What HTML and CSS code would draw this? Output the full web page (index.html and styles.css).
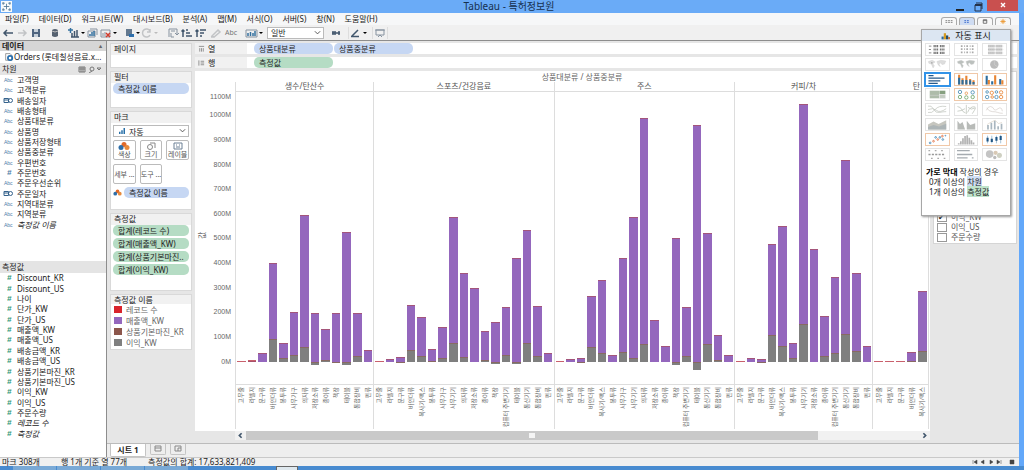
FILE: index.html
```html
<!DOCTYPE html>
<html lang="ko">
<head>
<meta charset="utf-8">
<title>Tableau - 특허정보원</title>
<link rel="stylesheet" href="styles.css">
</head>
<body>
<div class="window">
  <header class="titlebar">
    <svg class="app-icon" viewBox="0 0 20 20"><path d="M0 0h20v20H0z" fill="#f7fafc"/><path d="M10 5v10M5 10h10M4 2v5M2 4h5M16 2v5M13 4h5M4 13v5M2 16h5M16 13v5M13 16h5" stroke="#4d7594" stroke-width="1.5"/></svg>
    <h1 class="app-title">Tableau - 특허정보원</h1>
    <div class="window-buttons">
      <button class="win-btn" aria-label="최소화"><svg viewBox="0 0 18 10"><path d="M5 8h8" stroke="#222" stroke-width="2"/></svg></button>
      <button class="win-btn" aria-label="이전 크기로"><svg viewBox="0 0 18 10"><path d="M6 3h6v6H6zM7 1h6v6" fill="none" stroke="#24324a"/><path d="M6 3h7" stroke="#24324a" stroke-width="2"/></svg></button>
      <button class="win-btn close" aria-label="닫기"><svg viewBox="0 0 18 10"><path d="M7 3l4 4M11 3l-4 4" stroke="#fff" stroke-width="1.4"/></svg></button>
    </div>
  </header>

  <div class="frame">
    <nav class="menubar">
      <button>파일(F)</button><button>데이터(D)</button><button>워크시트(W)</button><button>대시보드(B)</button><button>분석(A)</button><button>맵(M)</button><button>서식(O)</button><button>서버(S)</button><button>창(N)</button><button>도움말(H)</button>
    </nav>

    <div class="toolbar">
      <div class="tools">
        <button aria-label="뒤로"><svg viewBox="0 0 14 12"><path d="M12 6H3M6 3L3 6l3 3" class="dark"/></svg></button>
        <button aria-label="앞으로"><svg viewBox="0 0 14 12"><path d="M3 6h8M8 3l3 3-3 3" class="pale"/></svg></button>
        <button aria-label="저장"><svg viewBox="0 0 14 12"><path d="M3 2h8v8H3z" fill="#4f6580"/><path d="M5 2h4v3H5zM5 7h4v3H5z" fill="#c6d0da"/></svg></button>
      </div>
      <div class="tools">
        <button aria-label="데이터 원본"><svg viewBox="0 0 14 12"><path d="M4 3v6q3 2 6 0V3q-3-2-6 0" fill="#566270"/><path d="M4 4q3 2 6 0" stroke="#bbb" fill="none"/></svg></button>
      </div>
      <div class="tools">
        <button class="wide" aria-label="워크시트 추가"><svg viewBox="0 0 18 12"><path d="M1 3h5M3.500 1v5" class="blue"/><path d="M5 10V6M7.500 10V4M10 10V3M4 10h8" class="dark"/><path d="M14 5h4l-2 2z"/></svg></button>
        <button aria-label="시트 복제"><svg viewBox="0 0 14 12"><path d="M3 4h7v6H3zM5 2h7v6" class="mid"/><path d="M5 9V7M7 9V5M9 9V4" class="blue"/></svg></button>
        <button class="wide" aria-label="시트 지우기"><svg viewBox="0 0 18 12"><path d="M2 3h9v7H2zM4 9V6M6 9V5" class="mid"/><path d="M7 6l4 4M11 6l-4 4" class="red"/><path d="M14 5h4l-2 2z"/></svg></button>
      </div>
      <div class="tools">
        <button class="wide" aria-label="자동 업데이트"><svg viewBox="0 0 18 12"><path d="M4 2h6v7H4z" fill="#64798f"/><path d="M7 7h5v3H7z" fill="#2d6eab"/><path d="M14 5h4l-2 2z"/></svg></button>
        <button class="wide" aria-label="새로 고침"><svg viewBox="0 0 18 12"><path d="M10 4a4 4 0 1 0 0 4M10 2v3H7" class="pale"/><path d="M14 5h4l-2 2z" fill="#bbb"/></svg></button>
      </div>
      <div class="tools sorts">
        <button aria-label="행과 열 바꾸기"><svg viewBox="0 0 14 12"><path d="M3 10V2h8v6M5 4h4M9 6l2 2 2-2M5 6v4h3" class="mid"/></svg></button>
        <button aria-label="오름차순 정렬"><svg viewBox="0 0 14 12"><path d="M3 10V3M1.500 4.500L3 3l1.500 1.500M6 3h2M6 6h4M6 9h6" class="dark"/></svg></button>
        <button aria-label="내림차순 정렬"><svg viewBox="0 0 14 12"><path d="M3 10V3M1.500 4.500L3 3l1.500 1.500M6 3h6M6 6h4M6 9h2" class="dark"/></svg></button>
        <button aria-label="하이라이트"><svg viewBox="0 0 14 12"><path d="M4 9l6-6 2 2-6 5zM3 10h3" class="pale"/></svg></button>
        <button class="wide abc">Abc</button>
      </div>
      <div class="tools view">
        <button class="wide" aria-label="카드 표시"><svg viewBox="0 0 18 12"><path d="M1 3h11v7H1z" class="mid"/><path d="M3 9V6M5.500 9V5M8 9V6M10 9V4" class="blue"/><path d="M14 5h4l-2 2z"/></svg></button>
        <div class="drop fit"><select aria-label="맞춤"><option>일반</option></select><svg viewBox="0 0 8 6"><path d="M1 1l3 3 3-3" fill="none" stroke="#444"/></svg></div>
        <button aria-label="축 고정"><svg viewBox="0 0 14 12"><path d="M3 6h8M4 4v4M6 4v4M10 4v4" class="dark"/></svg></button>
      </div>
      <div class="tools ruled">
        <button class="wide" aria-label="서식"><svg viewBox="0 0 18 12"><path d="M3 9l6-6M2 9.500h8" class="dark"/><path d="M14 5h4l-2 2z"/></svg></button>
      </div>
      <div class="tools ruled end">
        <button aria-label="프레젠테이션"><svg viewBox="0 0 14 12"><path d="M3 3h8v5H3zM2 3h10M5 10l2-2 2 2" class="mid"/></svg></button>
      </div>
      <div class="show-tabs">
        <button aria-label="카드"><svg viewBox="0 0 16 8"><path d="M4 3h9M4 5h9" stroke="#777" stroke-dasharray="2 1"/></svg></button>
        <button class="on" aria-label="표시"><svg viewBox="0 0 16 8"><path d="M5 3h6M5 5h6" stroke="#36c" stroke-dasharray="2 1"/></svg></button>
        <button aria-label="데이터"><svg viewBox="0 0 16 8"><path d="M6 2h4v4H6zM6 3h4" fill="none" stroke="#666"/></svg></button>
        <button aria-label="설정"><svg viewBox="0 0 16 8"><path d="M8 1v6M5 4h6M6 2l4 4M10 2L6 6" stroke="#eb9a36"/></svg></button>
      </div>
    </div>

    <main class="workspace">
      <aside class="data-pane">
        <h2 class="pane-title strong"><span>데이터</span><span class="mini">▴</span></h2>
        <div class="source"><svg viewBox="0 0 18 16"><path d="M3 1h8l3 3v9H3z" fill="#fff" stroke="#555"/><circle cx="11" cy="9" r="4" fill="none" stroke="#256dad" stroke-width="3"/></svg><span>Orders (롯데칠성음료.x...</span></div>
        <h2 class="pane-title"><span>차원</span><svg viewBox="0 0 24 8"><path d="M1 2h6v5H1zM1 4h6M3 2v5M5 2v5M14 6l-3 2M19 3h4l-2 2z" fill="none" stroke="#777"/><circle cx="14" cy="4" r="2" fill="none" stroke="#777"/></svg></h2>
        <ul class="fields dims" id="dims"></ul>
        <h2 class="pane-title measures-title"><span>측정값</span></h2>
        <ul class="fields measures" id="measures"></ul>
      </aside>

      <div class="sheet">
        <div class="sheet-body">
          <aside class="cards">
            <section class="card pages"><h3>페이지</h3></section>
            <section class="card filters"><h3>필터</h3><div class="stack"><button class="pill blue-pill">측정값 이름</button></div></section>
            <section class="card marks">
              <h3>마크</h3>
              <div class="mark-type drop"><svg viewBox="0 0 10 8"><path d="M2 8V5M5 8V3M8 8V0" stroke="#2870a8" stroke-width="2"/></svg><select aria-label="마크 유형"><option>자동</option></select><svg viewBox="0 0 8 6"><path d="M1 1l3 3 3-3" fill="none" stroke="#444"/></svg></div>
              <div class="mark-grid">
                <button><svg viewBox="0 0 12 8"><circle cx="6" cy="2.500" r="2.500" fill="#e06a2b"/><circle cx="3" cy="5.500" r="2.500" fill="#2e6ea8"/><circle cx="9" cy="5.500" r="2.500" fill="#e88a3b"/></svg>색상</button>
                <button><svg viewBox="0 0 12 8"><circle cx="5" cy="5" r="2.500" fill="none" stroke="#888"/><path d="M5 1h5v5" fill="none" stroke="#888"/></svg>크기</button>
                <button><svg viewBox="0 0 12 8"><path d="M2 1h8v6H2zM4 3h1M7 3h1M4 5h4" fill="none" stroke="#6c8095"/></svg>레이블</button>
                <button>세부 ...</button>
                <button>도구 ...</button>
              </div>
              <div class="mark-pill"><svg viewBox="0 0 12 8"><circle cx="6" cy="2.500" r="2.500" fill="#e06a2b"/><circle cx="3" cy="5.500" r="2.500" fill="#2e6ea8"/><circle cx="9" cy="5.500" r="2.500" fill="#e88a3b"/></svg><button class="pill blue-pill">측정값 이름</button></div>
            </section>
            <section class="card values"><h3>측정값</h3>
              <div class="stack">
                <button class="pill green-pill">합계(레코드 수)</button>
                <button class="pill green-pill">합계(매출액_KW)</button>
                <button class="pill green-pill">합계(상품기본마진..</button>
                <button class="pill green-pill">합계(이익_KW)</button>
              </div>
            </section>
            <section class="card legend"><h3>측정값 이름</h3>
              <ul>
                <li><i class="sw red-sw"></i>레코드 수</li>
                <li><i class="sw purple-sw"></i>매출액_KW</li>
                <li><i class="sw brown-sw"></i>상품기본마진_KR</li>
                <li><i class="sw gray-sw"></i>이익_KW</li>
              </ul>
            </section>
          </aside>

          <div class="view-area">
            <div class="shelf"><div class="shelf-name"><svg viewBox="0 0 8 8"><path d="M1 1h6M2 3v4M4 3v4M6 3v4" stroke="#888"/></svg>열</div><div class="shelf-drop"><button class="pill blue-pill">상품대분류</button><button class="pill blue-pill">상품중분류</button></div></div>
            <div class="shelf"><div class="shelf-name"><svg viewBox="0 0 8 8"><path d="M1 1v6M3 2h4M3 4h4M3 6h4" stroke="#888"/></svg>행</div><div class="shelf-drop"><button class="pill green-pill">측정값</button></div></div>
            <div class="view-row">
              <div class="chart-col">
                <section class="chart">
                  <h2 class="chart-title">상품대분류 / 상품중분류</h2>
                  <div class="chart-main">
                    <div class="axis-title">값</div>
                    <ol class="axis" id="axis"></ol>
                    <div class="panes" id="panes"></div>
                  </div>
                </section>
                <div class="scroll">
                  <button aria-label="왼쪽"><svg viewBox="0 0 8 8"><path d="M5 2L3 4l2 2" class="dark"/></svg></button>
                  <div class="track"><div class="thumb"><i></i></div></div>
                  <button aria-label="오른쪽"><svg viewBox="0 0 8 8"><path d="M3 2l2 2-2 2" class="dark"/></svg></button>
                </div>
              </div>
              <aside class="quick">
                <div class="quick-card">
                  <label><input type="checkbox" checked>이익_KW</label>
                  <label><input type="checkbox">이익_US</label>
                  <label><input type="checkbox">주문수량</label>
                </div>
              </aside>
            </div>
          </div>
        </div>

        <div class="sheet-tabs">
          <button class="tab active">시트 1</button>
          <button class="tab" aria-label="새 워크시트"><svg viewBox="0 0 10 8"><path d="M2 1h6v5H2zM2 3h6" fill="none" stroke="#888"/></svg></button>
          <button class="tab" aria-label="새 대시보드"><svg viewBox="0 0 10 8"><path d="M2 1h6v5H2zM5 3h3M5 3v3" fill="none" stroke="#888"/></svg></button>
        </div>
      </div>
    </main>

    <footer class="status"><span>마크 308개</span><span>행 1개 기준 열 77개</span><span>측정값의 합계: 17,633,821,409</span>
      <div class="pager">
        <button aria-label="처음"><svg viewBox="0 0 6 6"><path d="M1 1v4M5 1v4L2 3z"/></svg></button>
        <button aria-label="이전"><svg viewBox="0 0 6 6"><path d="M4 1v4L1 3z"/></svg></button>
        <button aria-label="다음"><svg viewBox="0 0 6 6"><path d="M2 1v4l3-2z"/></svg></button>
        <button aria-label="마지막"><svg viewBox="0 0 6 6"><path d="M1 1v4l3-2zM5 1v4"/></svg></button>
        <button class="last" aria-label="슬라이드"><svg viewBox="0 0 6 6"><path d="M1 1h4v4H1z"/></svg></button>
      </div>
    </footer>

    <section class="show-me">
      <h2><svg viewBox="0 0 18 14"><path d="M1 13V8h4v5z" fill="#2c6aa0"/><path d="M5 13V2h4v11z" fill="#d49a21"/><path d="M9 13V6h4v7z" fill="#224d70"/><path d="M13 13V9h3v4z" fill="#c06c26"/></svg>자동 표시</h2>
      <div class="thumbs">
        <button aria-label="텍스트 테이블"><svg viewBox="0 0 46 26"><path d="M3 5h6M3 13h5M3 21h6" stroke="#777" stroke-width="2"/><path d="M14 5h30M14 13h30M14 21h30" stroke="#777" stroke-width="5" stroke-dasharray="3 1 3 1 3 4"/></svg></button>
        <button aria-label="히트맵"><svg viewBox="0 0 46 26"><path d="M10 5h30M10 12h30M10 20h30" stroke="#aaa" stroke-width="4" stroke-dasharray="4 4 2 3"/></svg></button>
        <button aria-label="하이라이트 테이블"><svg viewBox="0 0 46 26"><path d="M8 5h36M8 13h36M8 21h36" stroke="#ccc" stroke-width="6" stroke-dasharray="16 2"/><path d="M8 5h36M8 13h36M8 21h36" stroke="#aaa" stroke-dasharray="3 2"/></svg></button>
        <button aria-label="심볼 맵"><svg viewBox="0 0 46 26"><path d="M2 6l9-3 7 4-6 4 4 5-3 5-4-9-6-2zM22 6l9-3 12 2-3 7-6 1-4-4-3 3 3 6-5-4z" fill="#ddd" stroke="#ccc"/><circle cx="10" cy="9" r="2" fill="#aaa"/></svg></button>
        <button aria-label="맵"><svg viewBox="0 0 46 26"><path d="M2 6l9-3 7 4-6 4 4 5-3 5-4-9-6-2zM22 6l9-3 12 2-3 7-6 1-4-4-3 3 3 6-5-4z" fill="#bbc0bd" stroke="#ccc"/></svg></button>
        <button aria-label="파이 차트"><svg viewBox="0 0 46 26"><circle cx="23" cy="13" r="10" fill="#bbb"/><path d="M23 3v10l8 6" fill="none" stroke="#ddd"/></svg></button>
        <button class="picked" aria-label="가로 막대"><svg viewBox="0 0 46 26"><path d="M2 4h12M2 10h38M2 16h28M2 22h22" stroke="#27598a" stroke-width="3"/></svg></button>
        <button class="ok" aria-label="누적 막대"><svg viewBox="0 0 46 26"><path d="M6 25V2M14 25V10M23 25V4M32 25V12M40 25V15" stroke="#e88534" stroke-width="5"/><path d="M6 25V9M14 25V14M23 25V14M32 25V15M40 25V19" stroke="#2e6e9e" stroke-width="5"/></svg></button>
        <button class="ok" aria-label="병렬 막대"><svg viewBox="0 0 46 26"><path d="M5 25V4M18 25V17M37 25V12" stroke="#2e6e9e" stroke-width="5"/><path d="M10 25V14M25 25V3M42 25V15" stroke="#e88534" stroke-width="5"/></svg></button>
        <button aria-label="트리맵"><svg viewBox="0 0 46 26"><path d="M5 4h22v18H5z" fill="#aebcaa"/><path d="M28 4h14v8H28z" fill="#87a080"/><path d="M28 13h14v9H28zM5 15h22" fill="#c5ccc2" stroke="#ddd"/></svg></button>
        <button class="ok" aria-label="원 뷰"><svg viewBox="0 0 46 26"><g fill="none" stroke-width="2"><circle cx="8" cy="7" r="4" stroke="#4a8db5"/><circle cx="8" cy="19" r="4" stroke="#71a66c"/><circle cx="23" cy="10" r="3" stroke="#e89b59"/><circle cx="23" cy="20" r="4" stroke="#71a66c"/><circle cx="38" cy="8" r="4" stroke="#4a8db5"/><circle cx="38" cy="19" r="4" stroke="#71a66c"/></g></svg></button>
        <button class="ok" aria-label="병렬 원"><svg viewBox="0 0 46 26"><g fill="none" stroke-width="2"><circle cx="6" cy="7" r="3" stroke="#4a8db5"/><circle cx="6" cy="19" r="4" stroke="#4a8db5"/><circle cx="17" cy="9" r="4" stroke="#e88534"/><circle cx="18" cy="19" r="3" stroke="#e88534"/><circle cx="28" cy="7" r="3" stroke="#4a8db5"/><circle cx="28" cy="19" r="4" stroke="#4a8db5"/><circle cx="39" cy="8" r="4" stroke="#e88534"/><circle cx="39" cy="19" r="4" stroke="#e88534"/></g></svg></button>
        <button aria-label="라인"><svg viewBox="0 0 46 26"><path d="M1 5q8-3 13 7t14 8 16-2M1 20q9 3 17-7t26-7M1 13q12-5 20 2t23-4" fill="none" stroke="#b8bdb4" stroke-width="1.500"/></svg></button>
        <button aria-label="이산형 라인"><svg viewBox="0 0 46 26"><path d="M2 6q8 1 10 7t9 8M2 17q8 0 18-6M26 20q6-16 18-13M27 8q8 7 15 2t-5 13M23 2v22" fill="none" stroke="#b0b7ac" stroke-width="1.500"/></svg></button>
        <button aria-label="이중 라인"><svg viewBox="0 0 46 26"><path d="M4 15q4-10 10-9t8 6 10-1 10 6M5 9q5 9 13 9t13 2 12 2" fill="none" stroke="#cfc9c5" stroke-width="1.500"/></svg></button>
        <button aria-label="영역"><svg viewBox="0 0 46 26"><path d="M1 25V13l13-7 12 6 18-9v22z" fill="#c6c6bf"/><path d="M1 25v-6l13-5 13 4 17-7v14z" fill="#adb5b7"/></svg></button>
        <button aria-label="이산형 영역"><svg viewBox="0 0 46 26"><path d="M2 25V4l6 8 6-5 6 18zM24 25V4l8 10 12-4v15z" fill="#b8bbb8"/></svg></button>
        <button aria-label="이중 조합"><svg viewBox="0 0 46 26"><path d="M8 25V14M16 25V9M24 25V4M32 25V17M40 25V11" stroke="#a9b6bf" stroke-width="4"/><path d="M6 13l10-6 9-4 8 8 8-3" fill="none" stroke="#c9b9a8"/></svg></button>
        <button class="ok" aria-label="분산형"><svg viewBox="0 0 46 26"><g fill="none" stroke="#e16f43" stroke-width="2"><circle cx="14" cy="17" r="2"/><circle cx="24" cy="13" r="2"/><circle cx="35" cy="5" r="2"/></g><g fill="none" stroke="#4388b7" stroke-width="2"><circle cx="6" cy="21" r="2"/><circle cx="19" cy="8" r="2"/><circle cx="29" cy="8" r="2"/><circle cx="36" cy="13" r="2"/><circle cx="42" cy="4" r="1"/></g></svg></button>
        <button aria-label="히스토그램"><svg viewBox="0 0 46 26"><path d="M5 25v-3M10 25v-8M15 25V10M20 25V5M25 25V3M30 25V9M35 25V15M40 25v-5" stroke="#b3b3b3" stroke-width="4"/></svg></button>
        <button class="ok" aria-label="박스 플롯"><svg viewBox="0 0 46 26"><path d="M7 4v18M17 4v18M28 4v18M38 2v20" stroke="#2e6e9e"/><path d="M7 9v9M17 11v8M28 7v9M38 5v9" stroke="#1f5685" stroke-width="5"/></svg></button>
        <button aria-label="간트"><svg viewBox="0 0 46 26"><path d="M2 4h40M8 22h34" stroke="#aaa" stroke-width="3" stroke-dasharray="4 11"/><path d="M2 13h40" stroke="#999" stroke-width="3" stroke-dasharray="5 3"/></svg></button>
        <button aria-label="불릿 그래프"><svg viewBox="0 0 46 26"><path d="M1 4h30M1 13h36M1 21h25M36 21h4" stroke="#a5abb0" stroke-width="3"/></svg></button>
        <button aria-label="버블"><svg viewBox="0 0 46 26"><circle cx="12" cy="12" r="9" fill="#c4c4c4"/><circle cx="26" cy="9" r="5" fill="#d9c9b5"/><circle cx="35" cy="15" r="6" fill="#cfd0c2"/><circle cx="24" cy="20" r="4" fill="#bbb"/></svg></button>
      </div>
      <div class="hint">
        <p><b>가로 막대</b> 작성의 경우</p>
        <p class="in">0개 이상의 <mark class="dim">차원</mark></p>
        <p class="in">1개 이상의 <mark class="mea">측정값</mark></p>
      </div>
    </section>
  </div>
  <div class="taskbar"><i></i><i></i><i></i><i></i><i class="lit"></i></div>
</div>
<script src="app.js"></script>
</body>
</html>
```

FILE: styles.css
```css
* { box-sizing: border-box; }
body { margin: 0; font: 8px/10px "Noto Sans", "Noto Sans CJK KR", sans-serif; color: #222; background: #63a8fa; }
h1, h2, h3, p, ul, ol { margin: 0; padding: 0; font-weight: 400; font-size: inherit; list-style: none; }
button, select, input { font: inherit; color: inherit; margin: 0; padding: 0; border: 0; background: none; }
svg { display: block; }
.dark { fill: none; stroke: #41566c; stroke-width: 1.5; }
.mid { fill: none; stroke: #8793a0; }
.pale { fill: none; stroke: #c2c4c6; stroke-width: 1.5; }
.blue { fill: none; stroke: #34719f; stroke-width: 1.5; }
.red { fill: none; stroke: #d33c2c; stroke-width: 1.5; }

.window { display: flex; flex-direction: column; height: 100vh; min-height: 470px; }
.titlebar { display: grid; grid-template-columns: 1fr auto 1fr; align-items: center; height: 13px; background: #6aabf7; padding-right: 6px; }
.app-icon { width: 11px; height: 11px; margin-left: 1px; }
.app-title { font-size: 10px; line-height: 13px; color: #16304f; }
.window-buttons { display: flex; justify-content: flex-end; height: 100%; }
.win-btn { width: 18px; }
.win-btn svg { width: 18px; height: 10px; }
.win-btn.close { width: 31px; height: 11px; background: #c9504f; display: flex; justify-content: center; }

.frame { flex: 1; min-height: 0; display: flex; flex-direction: column; position: relative; margin-right: 5px; background: #f0f0f0; }
.menubar { display: flex; gap: 10px; height: 12px; padding-left: 5px; background: #f6f7f8; align-items: center; }
.toolbar { display: flex; height: 16px; border-bottom: 1px solid #8d8d8d; background: #f0f0f0; align-items: center; gap: 5px; padding-left: 1px; }
.tools { display: flex; align-items: center; }
.tools.sorts { margin-left: 3px; }
.tools button { width: 14px; height: 12px; }
.tools button svg { width: 100%; height: 12px; }
.tools .wide { width: 18px; }
.tools .abc { color: #777; font-size: 7px; }
.tools.view { gap: 2px; }
.ruled { border-left: 1px solid #ddd; }
.ruled.end { border-right: 1px solid #ddd; }
.drop { display: flex; align-items: center; background: #fff; border: 1px solid #bbb; padding-right: 2px; }
.drop select { appearance: none; flex: 1; min-width: 0; height: 10px; line-height: 9px; padding-left: 3px; }
.drop svg { width: 7px; height: 6px; flex: none; }
.fit { width: 57px; height: 12px; margin: 0 3px 0 2px; }
.show-tabs { display: flex; align-self: flex-start; margin: -8px 8px 0 auto; gap: 2px; }
.show-tabs button { width: 16px; height: 8px; border: 1px solid #aaa; border-bottom: 0; border-radius: 3px 3px 0 0; background: #f8f8f8; }
.show-tabs .on { background: #cfdcf2; }
.show-tabs svg { width: 14px; height: 7px; }

.workspace { flex: 1; min-height: 0; display: flex; }
.data-pane { width: 107px; border-right: 1px solid #8d8d8d; background: #fff; display: flex; flex-direction: column; }
.pane-title { display: flex; align-items: center; justify-content: space-between; height: 12px; padding: 0 4px 0 2px; background: #e4e4e4; }
.pane-title svg { width: 24px; height: 8px; }
.pane-title.strong { height: 10px; background: #d6d6d6; font-weight: 700; }
.mini { font-size: 6px; color: #666; }
.source { display: flex; align-items: center; height: 12px; padding-left: 4px; white-space: nowrap; }
.source svg { width: 10px; height: 9px; flex: none; }
.fields { display: grid; grid-auto-rows: 1fr; }
.fields li { display: grid; grid-template-columns: 17px 1fr; align-items: center; white-space: nowrap; }
.dims { height: 155px; }
.measures { height: 166px; }
.measures-title { margin-top: 31px; }
.fields .kind { font: 5px/8px "Liberation Sans", sans-serif; color: #4c7ba7; padding-left: 4px; }
.fields .num { font-size: 8px; font-weight: 700; font-style: italic; padding-left: 7px; }
.measures .kind { color: #2d9676; }
.fields svg { width: 10px; height: 7px; margin-left: 3px; }
.calc { font-style: italic; }

.sheet { flex: 1; min-width: 0; display: flex; flex-direction: column; background: #e6e6e6; }
.sheet-body { flex: 1; min-height: 0; display: flex; gap: 3px; padding: 2px 2px 3px 3px; }
.cards { width: 82px; display: flex; flex-direction: column; gap: 3px; }
.card { background: #fff; border: 1px solid #d9d9d9; }
.card h3 { background: #f1f1f1; height: 11px; line-height: 9px; padding-left: 3px; }
.stack { display: grid; gap: 2px; padding: 0 2px; }
.pill { display: block; height: 11px; line-height: 11px; border-radius: 5px; padding: 0 5px; text-align: left; white-space: nowrap; }
.blue-pill { background: #c6d7f3; }
.green-pill { background: #b5dcc4; }
.pages { height: 25px; }
.filters { height: 37px; }
.marks { height: 99px; }
.values { height: 78px; }
.mark-type { margin: 2px 2px 3px; height: 12px; }
.mark-type svg:first-child { width: 8px; height: 6px; margin-left: 4px; }
.mark-grid { display: grid; grid-template-columns: repeat(3, 1fr); grid-auto-rows: 20px; gap: 4px; margin: 0 2px; }
.mark-grid button { display: flex; flex-direction: column; align-items: center; justify-content: center; border: 1px solid #bbb; border-radius: 2px; font-size: 7px; line-height: 9px; white-space: nowrap; background: #fff; color: #555; }
.mark-grid svg { width: 12px; height: 8px; }
.mark-pill { display: grid; grid-template-columns: 9px 1fr; gap: 2px; align-items: center; margin: 3px 2px 0; }
.mark-pill svg { width: 9px; height: 7px; }
.legend h3 { height: 9px; line-height: 9px; }
.legend ul { padding-bottom: 1px; }
.legend li { display: flex; align-items: center; gap: 4px; height: 11px; padding-left: 3px; color: #666; white-space: nowrap; }
.sw { width: 8px; height: 7px; }
.red-sw { background: #d9242b; }
.purple-sw { background: #9467bd; }
.brown-sw { background: #8c564b; }
.gray-sw { background: #7f7f7f; }

.view-area { flex: 1; min-width: 0; display: flex; flex-direction: column; gap: 3px; }
.shelf { display: flex; height: 11px; background: #fff; }
.shelf-name { width: 56px; display: flex; align-items: center; gap: 3px; padding-left: 3px; background: linear-gradient(90deg, #f1f1f1 92%, #fff 92%); }
.shelf-name svg { width: 7px; height: 8px; }
.shelf-drop { display: flex; gap: 1px; padding-left: 3px; }
.shelf-drop .pill { width: 79px; }
.view-row { flex: 1; min-height: 0; display: flex; }
.chart-col { flex: 1; min-width: 0; display: flex; flex-direction: column; }
.chart { flex: 1; min-height: 0; background: #fff; display: flex; flex-direction: column; padding: 0 1px 2px 2px; color: #666; }
.chart-title { height: 11px; line-height: 11px; text-align: center; padding-left: 38px; }
.chart-main { flex: 1; min-height: 0; display: grid; grid-template-columns: 10px 28px 1fr; }
.axis-title { writing-mode: vertical-rl; text-orientation: sideways; transform: rotate(180deg); text-align: center; padding-top: 40px; }
.axis { display: grid; grid-template-rows: 12px repeat(11, 1fr) 10px; padding: 9px 4px 45px 0; font: 7px/8px "Liberation Sans", sans-serif; text-align: right; align-items: center; }
.panes { display: flex; min-width: 0; border-right: 1px solid #ddd; }
.pane { display: flex; flex-direction: column; min-width: 0; border-left: 1px solid #ddd; }
.pane-name { height: 10px; line-height: 8px; text-align: center; border-bottom: 1px solid #ddd; color: #555; white-space: nowrap; }
.pane.cut .pane-name { text-align: right; padding-right: 8px; }
.plot { flex: 1; min-height: 0; display: flex; }
.col { flex: 1; min-width: 0; display: flex; flex-direction: column; padding: 0 1px; }
.up { flex: 270 1 0; min-height: 0; display: flex; flex-direction: column; justify-content: flex-end; }
.down { flex: 22 1 0; min-height: 0; }
.bar { background: #9467bd; border-top: 1px solid #a4557b; display: flex; flex-direction: column; justify-content: flex-end; }
.bar.tiny { min-height: 1px; background: #a8506a; border-top-color: #c9606c; }
.profit, .loss { background: #7f7f7f; border-top: 1px solid #896a62; }
.labels { display: flex; height: 45px; border-top: 1px solid #ddd; padding-top: 2px; }
.labels span { flex: 1; min-width: 0; display: flex; justify-content: center; align-items: flex-start; }
.labels b { font-weight: 400; font-size: 6px; line-height: 8px; writing-mode: vertical-rl; text-orientation: sideways; transform: rotate(180deg); white-space: nowrap; }
.scroll { display: flex; height: 9px; padding-left: 40px; background: linear-gradient(90deg, #e6e6e6 40px, #f1f1f1 40px); }
.scroll button { width: 11px; }
.scroll svg { width: 9px; height: 9px; margin: 0 auto; }
.track { flex: 1; }
.thumb { width: 85%; height: 9px; background: #c9c9c9; display: flex; align-items: center; justify-content: center; }
.thumb i { width: 6px; height: 5px; background: #f4f4f4; }
.quick { width: 87px; padding: 0 0 0 3px; }
.quick-card { height: 173px; background: #fff; border: 1px solid #d5d5d5; display: flex; flex-direction: column; justify-content: flex-end; padding: 0 3px 1px; color: #555; }
.quick-card label { display: flex; align-items: center; gap: 4px; height: 10px; }
.quick-card input { appearance: none; width: 10px; height: 9px; border: 1px solid #999; background: #fff; }
.quick-card input:checked::before { content: "✔"; display: block; font: 8px/7px "DejaVu Sans", sans-serif; color: #111; }

.sheet-tabs { display: flex; gap: 4px; height: 14px; padding-left: 3px; border-top: 1px solid #bbb; background: #eee; }
.tab { width: 16px; height: 11px; border: 1px solid #c4c4c4; border-top: 0; border-radius: 0 0 2px 2px; }
.tab svg { width: 10px; height: 8px; margin: 0 auto; }
.tab.active { width: 36px; height: 13px; background: #fff; font-weight: 700; }
.status { display: flex; align-items: center; gap: 21px; height: 9px; padding-left: 2px; background: #f0f0f0; border-top: 1px solid #c9c9c9; line-height: 8px; }
.pager { margin-left: auto; display: flex; gap: 2px; padding: 0 4px; }
.pager button { width: 6px; height: 6px; }
.pager .last { margin-left: 5px; }
.pager svg { width: 6px; height: 6px; stroke: #444; stroke-width: .5; fill: #444; }
.taskbar { display: flex; gap: 1px; height: 4px; background: #488bd0; padding-left: 13px; }
.taskbar i { width: 43px; background: #79a9d6; }
.taskbar .lit { width: 22px; margin-left: 87px; background: #dfe8ee; border: 1px solid #666; border-bottom: 0; }

.show-me { position: absolute; top: 16px; right: 8px; width: 90px; min-height: 187px; background: #fff; border: 1px solid #a7a7a7; box-shadow: 1px 1px 2px #999; }
.show-me h2 { display: flex; align-items: center; justify-content: center; gap: 4px; height: 11px; background: #dce6f2; font-size: 9px; }
.show-me h2 svg { width: 10px; height: 8px; }
.thumbs { display: grid; grid-template-columns: repeat(3, 1fr); grid-auto-rows: 13px; gap: 2px 4px; padding: 2px 3px 3px; }
.thumbs button { border: 1px solid #e4e4e4; }
.thumbs svg { width: 100%; height: 11px; }
.thumbs .ok { border-color: #f0c8a8; }
.thumbs .picked { border: 1px solid #3293e8; outline: 1px solid #3293e8; }
.hint { padding: 3px 4px; line-height: 10px; white-space: nowrap; }
.hint .in { padding-left: 3px; }
.hint b { font-weight: 700; color: #000; }
mark { color: inherit; }
.dim { background: #d0dff5; }
.mea { background: #bfe3cc; }
```

FILE: app.js
```js
const dims = ["고객명", "고객분류", "배송일자", "배송형태", "상품대분류", "상품명", "상품저장형태", "상품중분류", "우편번호", "주문번호", "주문우선순위", "주문일자", "지역대분류", "지역분류", "측정값 이름"];
const measures = ["Discount_KR", "Discount_US", "나이", "단가_KW", "단가_US", "매출액_KW", "매출액_US", "배송금액_KR", "배송금액_US", "상품기본마진_KR", "상품기본마진_US", "이익_KW", "이익_US", "주문수량", "레코드 수", "측정값"];
const dateIcon = '<svg viewBox="0 0 20 14"><path d="M2 3h9v8H2zM2 6h9" fill="none" stroke="#35628c" stroke-width="2"/><circle cx="15" cy="7" r="4" fill="none" stroke="#35628c" stroke-width="2"/></svg>';

function kind(name, isMeasure) {
  if (isMeasure || name === "주문번호") return '<span class="kind num">#</span>';
  if (name.endsWith("일자")) return dateIcon;
  return '<span class="kind">Abc</span>';
}
function fill(id, names, isMeasure) {
  const calc = ["측정값 이름", "레코드 수", "측정값"];
  document.getElementById(id).innerHTML = names.map(n =>
    `<li class="${calc.includes(n) ? "calc" : ""}">${kind(n, isMeasure)}<span>${n}</span></li>`).join("");
}
fill("dims", dims, false);
fill("measures", measures, true);

let ticks = "";
for (let v = 1100; v >= 0; v -= 100) ticks += `<li>${v}M</li>`;
document.getElementById("axis").innerHTML = ticks;

// Each row: label, sales and profit, both in millions.
const panes = [
  { name: "생수/탄산수", span: 13, rows: [["고무줄", 5, 0], ["라벨지", 10, 0], ["문구류", 35, 0], ["바인더류", 402, 93], ["봉투류", 79, 16], ["사무가구", 203, 28], ["의자류", 597, 61], ["저장소류", 201, -13], ["종이류", 133, 9], ["책장", 198, -5], ["테이블", 531, -13], ["통합장비", 198, 25], ["펜류", 49, 0]] },
  { name: "스포츠/건강음료", span: 17, rows: [["고무줄", 5, 0], ["라벨지", 13, 0], ["문구류", 21, -4], ["바인더류", 232, 49], ["복사기/팩스", 184, 24], ["봉투류", 51, 5], ["사무가구", 143, 17], ["사무기기", 592, 77], ["의자류", 363, 21], ["저장소류", 303, 0], ["종이류", 128, 9], ["책장", 165, -8], ["컴퓨터 주변기기", 224, 28], ["테이블", 423, -8], ["통신기기", 538, 79], ["통합장비", 230, 24], ["펜류", 36, 0]] },
  { name: "주스", span: 17, rows: [["고무줄", 2, 0], ["라벨지", 13, 0], ["문구류", 18, -4], ["바인더류", 268, 61], ["복사기/팩스", 336, 36], ["봉투류", 27, 0], ["사무가구", 424, 43], ["사무기기", 592, 16], ["의자류", 996, 75], ["저장소류", 171, 0], ["종이류", 67, 0], ["책장", 505, -13], ["컴퓨터 주변기기", 224, 25], ["테이블", 967, -34], ["통신기기", 527, 72], ["통합장비", 112, 8], ["펜류", 27, 0]] },
  { name: "커피/차", span: 13, rows: [["고무줄", 5, 0], ["라벨지", 18, 0], ["문구류", 13, -4], ["바인더류", 481, 111], ["복사기/팩스", 556, 66], ["봉투류", 76, 16], ["사무기기", 1050, 156], ["저장소류", 460, 0], ["종이류", 188, 24], ["컴퓨터 주변기기", 348, 38], ["통신기기", 823, 114], ["통합장비", 362, 47], ["펜류", 67, 0]] },
  { name: "탄", span: 5.2, cut: true, rows: [["고무줄", 1, 0], ["라벨지", 2, 0], ["문구류", 1, 0], ["바인더류", 39, 5], ["복사기/팩스", 290, 44]] }
];
const pct = (v, of) => (Math.abs(v) / of * 100).toFixed(2) + "%";
function column([, sales, profit]) {
  const gain = profit > 0 ? `<div class="profit" style="height:${pct(profit, sales)}"></div>` : "";
  const loss = profit < 0 ? `<div class="loss" style="height:${pct(profit, 90)}"></div>` : "";
  return `<div class="col"><div class="up"><div class="bar${sales < 12 ? " tiny" : ""}" style="height:${pct(sales, 1100)}">${gain}</div></div><div class="down">${loss}</div></div>`;
}
document.getElementById("panes").innerHTML = panes.map(p => `
  <section class="pane${p.cut ? " cut" : ""}" style="flex:${p.span} 1 0">
    <h3 class="pane-name">${p.name}</h3>
    <div class="plot">${p.rows.map(column).join("")}</div>
    <div class="labels">${p.rows.map(r => `<span><b>${r[0]}</b></span>`).join("")}</div>
  </section>`).join("");
```
